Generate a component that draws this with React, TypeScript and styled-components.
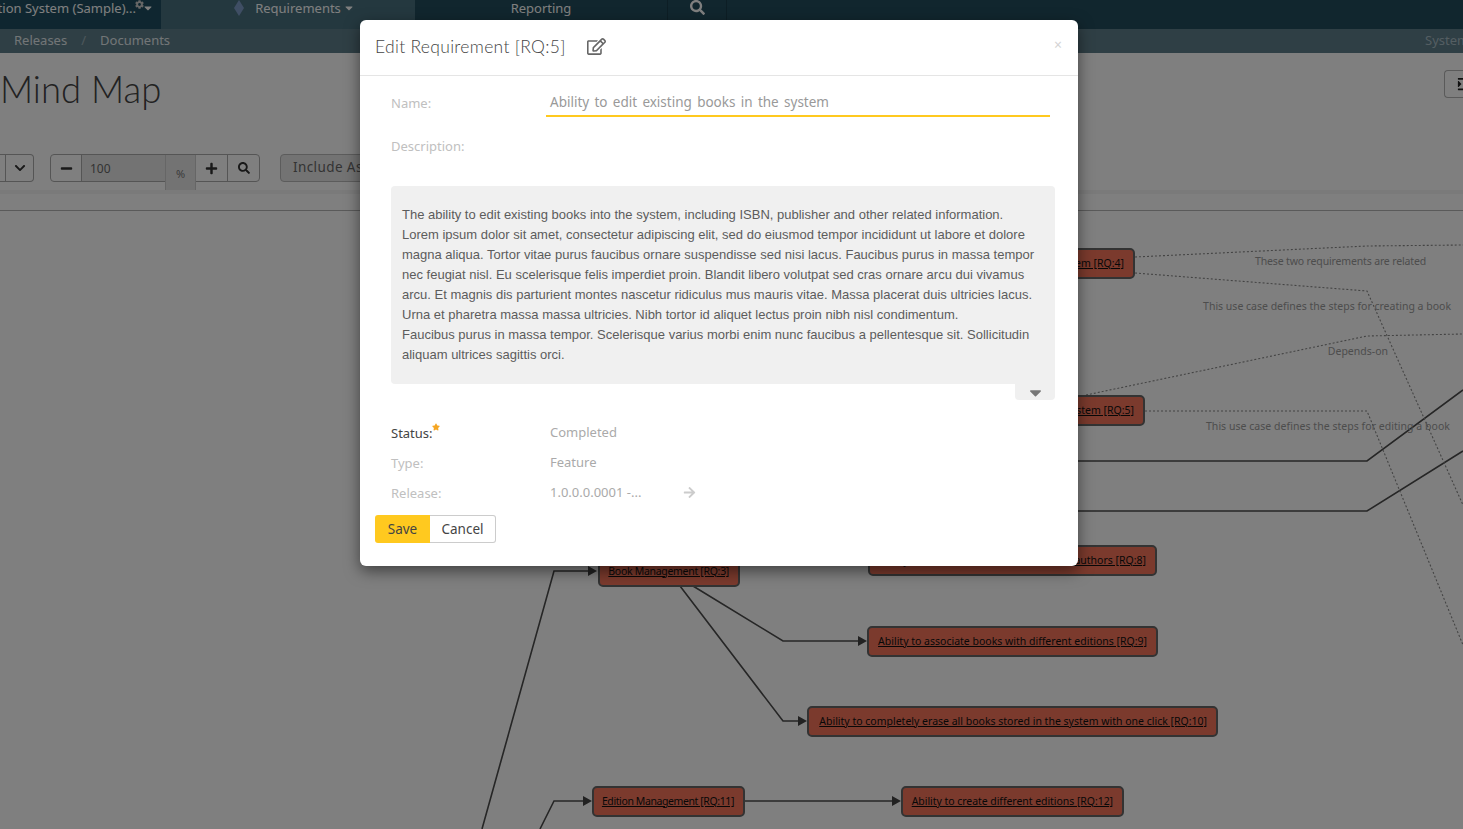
import { createGlobalStyle, styled } from 'styled-components';
import {
  FaArrowRight,
  FaCaretDown,
  FaChevronDown,
  FaCog,
  FaIndent,
  FaMinus,
  FaPlus,
  FaRegEdit,
  FaSearch,
  FaStar,
} from 'react-icons/fa';

const UI_FONT = `"Noto Sans", "Open Sans", sans-serif`;

const GlobalStyle = createGlobalStyle`
  html, body {
    margin: 0;
    padding: 0;
    height: 100%;
    overflow: hidden;
    background: #fff;
    font-family: ${UI_FONT};
  }
  * { box-sizing: border-box; }
`;

const Page = styled.div`
  width: 1463px;
  height: 829px;
  display: flex;
  flex-direction: column;
  overflow: hidden;
  position: relative;
`;

const TopBar = styled.div`
  height: 29px;
  flex: none;
  display: flex;
  background: #224c5c;
`;

const TopItem = styled.div<{ $width: number; $bg?: string; $divider?: boolean; $align?: string }>`
  width: ${({ $width }) => $width}px;
  flex: none;
  display: flex;
  align-items: center;
  justify-content: ${({ $align }) => $align || 'center'};
  gap: 3px;
  padding-bottom: 14px;
  height: 29px;
  overflow: hidden;
  white-space: nowrap;
  background: ${({ $bg }) => $bg || 'transparent'};
  border-right: ${({ $divider }) => ($divider ? '1px solid #1a3d4a' : 'none')};
  color: #fff;
  font-size: 13px;
  line-height: 16px;
`;

const TopCog = styled.span`
  font-size: 9px;
  display: inline-flex;
  margin: -7px -4px 0 -4px;
  color: #ccc;
`;

const SmallCaret = styled.span`
  font-size: 12px;
  display: inline-flex;
  margin-left: -1px;
`;

const TrailingGap = styled.span`
  width: 4px;
  flex: none;
`;

const Diamond = styled.svg`
  width: 10px;
  height: 16px;
  margin: 0 8px 0 13px;
  fill: #7f9cc8;
`;

const SubBar = styled.div`
  height: 24px;
  flex: none;
  display: flex;
  align-items: center;
  padding: 0 0 2px 14px;
  background: #5e7e8a;
  color: #e4ebee;
  font-size: 13px;
  overflow: hidden;
  white-space: nowrap;
`;

const SubSlash = styled.span`
  margin: 0 14px;
  opacity: 0.45;
`;

const SubRight = styled.span`
  margin-left: auto;
  margin-right: 0;
  width: 38px;
  overflow: hidden;
  color: #a8bdc5;
`;

const TitleRow = styled.div`
  height: 101px;
  flex: none;
  display: flex;
  justify-content: space-between;
  align-items: flex-start;
  padding: 16px 0 0 0;
`;

const PageTitle = styled.h1`
  margin: 0;
  font-family: Lato, sans-serif;
  font-weight: 300;
  font-size: 36.5px;
  line-height: 40px;
  letter-spacing: 0;
  color: #444;
`;

const SideButton = styled.div`
  width: 19px;
  height: 28px;
  margin-top: 1px;
  display: flex;
  align-items: center;
  padding-left: 12px;
  overflow: hidden;
  border: 1px solid #b4b4b4;
  border-right: none;
  border-radius: 4px 0 0 4px;
  color: #222;
  font-size: 14px;

  svg {
    flex: none;
  }
`;

const Toolbar = styled.div`
  height: 36px;
  flex: none;
  display: flex;
  align-items: flex-start;
`;

const CutGroup = styled.div`
  width: 34px;
  height: 28px;
  flex: none;
  display: flex;
  border: 1px solid #aaa;
  border-left: none;
  border-radius: 0 4px 4px 0;
  margin-right: 16px;
`;

const ToolButton = styled.div<{ $width: number; $bold?: boolean; $first?: boolean }>`
  width: ${({ $width }) => $width}px;
  height: 100%;
  flex: none;
  display: flex;
  align-items: center;
  justify-content: center;
  border-left: ${({ $first }) => ($first ? 'none' : '1px solid #aaa')};
  color: #333;
  font-size: ${({ $bold }) => ($bold ? 13 : 12)}px;
`;

const ZoomGroup = styled.div`
  width: 210px;
  height: 28px;
  flex: none;
  display: flex;
  border: 1px solid #aaa;
  border-radius: 4px;
  margin-right: 20px;
`;

const ZoomInput = styled.div`
  width: 84px;
  flex: none;
  display: flex;
  align-items: center;
  padding-left: 8px;
  border-left: 1px solid #aaa;
  background: #e7e7e7;
  color: #666;
  font-size: 12px;
`;

const ZoomUnit = styled.div`
  width: 31px;
  height: 36px;
  flex: none;
  display: flex;
  align-items: center;
  justify-content: center;
  padding-top: 2px;
  background: #e7e7e7;
  border: 1px solid #ccc;
  border-top: none;
  color: #777;
  font-size: 11px;
`;

const IncludeButton = styled.div`
  width: 180px;
  height: 28px;
  flex: none;
  display: flex;
  align-items: center;
  padding: 0 0 2px 12px;
  white-space: nowrap;
  border: 1px solid #b8b8b8;
  border-radius: 4px;
  background: #e7e7e7;
  color: #666;
  font-size: 13.5px;
  letter-spacing: 0.4px;
`;

const Band = styled.div`
  height: 4px;
  flex: none;
  background: #f4f4f4;
`;

const CanvasRule = styled.div`
  height: 17px;
  flex: none;
  border-bottom: 1px solid #b4b4b4;
`;

const Canvas = styled.div`
  position: relative;
  flex: 1;
  background: #fff;
`;

const Edges = styled.svg`
  position: absolute;
  left: 0;
  top: 0;
  width: 1463px;
  height: 618px;
`;

const Node = styled.div<{ $left: number; $top: number; $width: number; $spacing?: number }>`
  position: absolute;
  left: ${({ $left }) => $left}px;
  top: ${({ $top }) => $top}px;
  width: ${({ $width }) => $width}px;
  height: 31px;
  display: flex;
  align-items: center;
  justify-content: flex-end;
  padding: 0 9px 2px;
  background: #f6745a;
  border: 2px solid #666;
  border-radius: 5px;
  overflow: hidden;
  white-space: nowrap;
  color: #111;
  font-size: 10.5px;
  letter-spacing: ${({ $spacing }) => $spacing || 0}px;
  text-decoration: underline;
`;

const EdgeLabel = styled.span<{ $right: number; $top: number; $spacing?: number }>`
  position: absolute;
  right: ${({ $right }) => $right}px;
  top: ${({ $top }) => $top}px;
  white-space: nowrap;
  color: #9a9a9a;
  font-size: 10.5px;
  line-height: 14px;
  letter-spacing: ${({ $spacing }) => $spacing || 0}px;
`;

const Overlay = styled.div`
  position: absolute;
  inset: 0;
  display: flex;
  justify-content: center;
  align-items: flex-start;
  padding: 20px 25px 0 0;
  background: rgba(0, 0, 0, 0.5);
`;

const Modal = styled.div`
  width: 718px;
  height: 546px;
  background: #fff;
  border-radius: 6px;
  box-shadow: 0 5px 15px rgba(0, 0, 0, 0.5);
`;

const ModalHeader = styled.div`
  height: 56px;
  display: flex;
  align-items: center;
  padding: 0 15px 2px;
  border-bottom: 1px solid #e5e5e5;
`;

const ModalTitle = styled.h4`
  margin: 0;
  font-family: Lato, sans-serif;
  font-weight: 300;
  font-size: 17.5px;
  letter-spacing: 0.3px;
  color: #444;
`;

const EditIcon = styled.span`
  display: inline-flex;
  margin-left: 21px;
  font-size: 19px;
  color: #666;
`;

const CloseMark = styled.span`
  margin-left: auto;
  margin-top: -4px;
  margin-right: 1px;
  color: #d4d4d4;
  font-size: 14px;
  line-height: 1;
`;

const ModalBody = styled.div`
  padding: 11px 23px 0 31px;
`;

const LabelCell = styled.div<{ $strong?: boolean }>`
  width: 155px;
  flex: none;
  color: ${({ $strong }) => ($strong ? '#444' : '#c0c0c0')};
  font-size: 13px;
  line-height: 18px;
`;

const Required = styled.span`
  display: inline-flex;
  vertical-align: top;
  margin-left: -1px;
  margin-top: -1px;
  font-size: 8px;
  color: #f5a623;
`;

const NameRow = styled.div`
  display: flex;
  height: 30px;
  align-items: center;
  margin-right: 5px;

  ${LabelCell} {
    margin-top: 2px;
  }
`;

const NameInput = styled.div`
  flex: 1;
  height: 30px;
  padding: 5px 0 0 4px;
  border-bottom: 2px solid #ffc91f;
  color: #999;
  font-size: 13.5px;
  line-height: 20px;
  word-spacing: 1.8px;
`;

const DescriptionRow = styled.div`
  height: 18px;
  margin-top: 20px;
  display: flex;
`;

const Editor = styled.div`
  position: relative;
  margin-top: 31px;
  height: 198px;
  padding: 19px 11px;
  background: #f0f0f0;
  border-radius: 4px 4px 0 4px;
  color: #5c5c5c;
  font-family: "Liberation Sans", Arial, sans-serif;
  font-size: 13px;
  line-height: 20px;
  white-space: nowrap;
`;

const EditorGrip = styled.div`
  position: absolute;
  right: 0;
  bottom: -16px;
  width: 40px;
  height: 16px;
  display: flex;
  align-items: center;
  justify-content: center;
  background: #f0f0f0;
  border-radius: 0 0 4px 4px;
  color: #777;
  font-size: 19px;
`;

const FieldRow = styled.div<{ $gap: number }>`
  display: flex;
  align-items: center;
  height: 18px;
  margin-top: ${({ $gap }) => $gap}px;

  ${LabelCell} {
    margin-top: 2px;
  }
`;

const FieldValue = styled.div`
  width: 137px;
  flex: none;
  padding-left: 4px;
  color: #aaa;
  font-size: 13px;
  line-height: 18px;
`;

const GoArrow = styled.span`
  display: inline-flex;
  color: #ccc;
  font-size: 13px;
`;

const ButtonRow = styled.div`
  display: flex;
  margin: 14px 0 0 -16px;
`;

const SaveButton = styled.button`
  width: 55px;
  height: 28px;
  padding: 0 0 1px;
  border: none;
  border-radius: 3px 0 0 3px;
  background: #ffc91f;
  color: #444;
  font-family: ${UI_FONT};
  font-size: 13.5px;
`;

const CancelButton = styled.button`
  width: 66px;
  height: 28px;
  padding: 0 0 1px;
  border: 1px solid #ccc;
  border-left: none;
  border-radius: 0 3px 3px 0;
  background: #fff;
  color: #444;
  font-family: ${UI_FONT};
  font-size: 13.5px;
`;

const nodes = [
  { left: 860, top: 37, width: 275, text: 'Ability to create new books in the system [RQ:4]' },
  { left: 860, top: 184, width: 285, text: 'Ability to edit existing books in the system [RQ:5]' },
  { left: 868, top: 334, width: 289, text: 'Ability to associate books with different authors [RQ:8]' },
  { left: 598, top: 345, width: 142, text: 'Book Management [RQ:3]', spacing: -0.3 },
  { left: 867, top: 415, width: 291, text: 'Ability to associate books with different editions [RQ:9]' },
  { left: 807, top: 495, width: 411, text: 'Ability to completely erase all books stored in the system with one click [RQ:10]' },
  { left: 592, top: 575, width: 153, text: 'Edition Management [RQ:11]', spacing: -0.4 },
  { left: 901, top: 575, width: 223, text: 'Ability to create different editions [RQ:12]', spacing: -0.05 },
];

const edgeLabels = [
  { right: 37, top: 43, text: 'These two requirements are related', spacing: -0.15 },
  { right: 12, top: 88, text: 'This use case defines the steps for creating a book' },
  { right: 75, top: 133, text: 'Depends-on' },
  { right: 13, top: 208, text: 'This use case defines the steps for editing a book', spacing: 0.04 },
];

// solid links between requirements, in page coordinates
const solidEdges = [
  '482,829 554,571 588,571',
  '540,829 554,801 584,801',
  '680,586 783,721 800,721',
  '693,586 783,641 860,641',
  '745,801 894,801',
  '700,461 1367,461 1463,390',
  '700,511 1367,511 1463,451',
];

const dottedEdges = [
  '1135,257 1367,246 1463,245',
  '1135,273 1367,291 1463,505',
  '1086,395 1367,336 1463,334',
  '1145,411 1367,411 1463,645',
];

const arrowHeads = [
  [597, 571],
  [592, 801],
  [807, 721],
  [867, 641],
  [901, 801],
];

const DESCRIPTION = [
  'The ability to edit existing books into the system, including ISBN, publisher and other related information.',
  'Lorem ipsum dolor sit amet, consectetur adipiscing elit, sed do eiusmod tempor incididunt ut labore et dolore',
  'magna aliqua. Tortor vitae purus faucibus ornare suspendisse sed nisi lacus. Faucibus purus in massa tempor',
  'nec feugiat nisl. Eu scelerisque felis imperdiet proin. Blandit libero volutpat sed cras ornare arcu dui vivamus',
  'arcu. Et magnis dis parturient montes nascetur ridiculus mus mauris vitae. Massa placerat duis ultricies lacus.',
  'Urna et pharetra massa massa ultricies. Nibh tortor id aliquet lectus proin nibh nisl condimentum.',
  'Faucibus purus in massa tempor. Scelerisque varius morbi enim nunc faucibus a pellentesque sit. Sollicitudin',
  'aliquam ultrices sagittis orci.',
];

function App() {
  return (
    <Page>
      <GlobalStyle />
      <TopBar>
        <TopItem $width={161} $bg="#1e4d60" $align="flex-end">
          Library Information System (Sample)...
          <TopCog>
            <FaCog />
          </TopCog>
          <SmallCaret>
            <FaCaretDown />
          </SmallCaret>
          <TrailingGap />
        </TopItem>
        <TopItem $width={254} $bg="#48707e">
          <Diamond viewBox="0 0 10 16">
            <path d="M5 0 L10 8 L5 16 L0 8 Z" />
          </Diamond>
          Requirements
          <SmallCaret>
            <FaCaretDown />
          </SmallCaret>
        </TopItem>
        <TopItem $width={253} $divider>
          Reporting
        </TopItem>
        <TopItem $width={59} $divider>
          <FaSearch size={15} />
        </TopItem>
      </TopBar>
      <SubBar>
        Releases
        <SubSlash>/</SubSlash>
        Documents
        <SubRight>System</SubRight>
      </SubBar>
      <TitleRow>
        <PageTitle>Mind Map</PageTitle>
        <SideButton>
          <FaIndent />
        </SideButton>
      </TitleRow>
      <Toolbar>
        <CutGroup>
          <ToolButton $width={5} $first />
          <ToolButton $width={28}>
            <FaChevronDown />
          </ToolButton>
        </CutGroup>
        <ZoomGroup>
          <ToolButton $width={30} $bold $first>
            <FaMinus />
          </ToolButton>
          <ZoomInput>100</ZoomInput>
          <ZoomUnit>%</ZoomUnit>
          <ToolButton $width={31} $bold $first>
            <FaPlus />
          </ToolButton>
          <ToolButton $width={32}>
            <FaSearch />
          </ToolButton>
        </ZoomGroup>
        <IncludeButton>Include Associations</IncludeButton>
      </Toolbar>
      <Band />
      <CanvasRule />
      <Canvas>
        <Edges viewBox="0 211 1463 618">
          {solidEdges.map((points) => (
            <polyline key={points} points={points} fill="none" stroke="#4c4c4c" strokeWidth="1.6" />
          ))}
          {dottedEdges.map((points) => (
            <polyline
              key={points}
              points={points}
              fill="none"
              stroke="#888"
              strokeWidth="1.1"
              strokeDasharray="2 2"
            />
          ))}
          {arrowHeads.map(([x, y]) => (
            <path key={`${x}-${y}`} d={`M${x} ${y} L${x - 9} ${y - 5} L${x - 9} ${y + 5} Z`} fill="#444" />
          ))}
        </Edges>
        {nodes.map((node) => (
          <Node key={node.text} $left={node.left} $top={node.top} $width={node.width} $spacing={node.spacing}>
            {node.text}
          </Node>
        ))}
        {edgeLabels.map((label) => (
          <EdgeLabel key={label.text} $right={label.right} $top={label.top} $spacing={label.spacing}>
            {label.text}
          </EdgeLabel>
        ))}
      </Canvas>
      <Overlay>
        <Modal>
          <ModalHeader>
            <ModalTitle>Edit Requirement [RQ:5]</ModalTitle>
            <EditIcon>
              <FaRegEdit />
            </EditIcon>
            <CloseMark>×</CloseMark>
          </ModalHeader>
          <ModalBody>
            <NameRow>
              <LabelCell>Name:</LabelCell>
              <NameInput>Ability to edit existing books in the system</NameInput>
            </NameRow>
            <DescriptionRow>
              <LabelCell>Description:</LabelCell>
            </DescriptionRow>
            <Editor>
              {DESCRIPTION.map((line) => (
                <div key={line}>{line}</div>
              ))}
              <EditorGrip>
                <FaCaretDown />
              </EditorGrip>
            </Editor>
            <FieldRow $gap={39}>
              <LabelCell $strong>
                Status:
                <Required>
                  <FaStar />
                </Required>
              </LabelCell>
              <FieldValue>Completed</FieldValue>
            </FieldRow>
            <FieldRow $gap={12}>
              <LabelCell>Type:</LabelCell>
              <FieldValue>Feature</FieldValue>
            </FieldRow>
            <FieldRow $gap={12}>
              <LabelCell>Release:</LabelCell>
              <FieldValue>1.0.0.0.0001 -...</FieldValue>
              <GoArrow>
                <FaArrowRight />
              </GoArrow>
            </FieldRow>
            <ButtonRow>
              <SaveButton>Save</SaveButton>
              <CancelButton>Cancel</CancelButton>
            </ButtonRow>
          </ModalBody>
        </Modal>
      </Overlay>
    </Page>
  );
}

export default App;
